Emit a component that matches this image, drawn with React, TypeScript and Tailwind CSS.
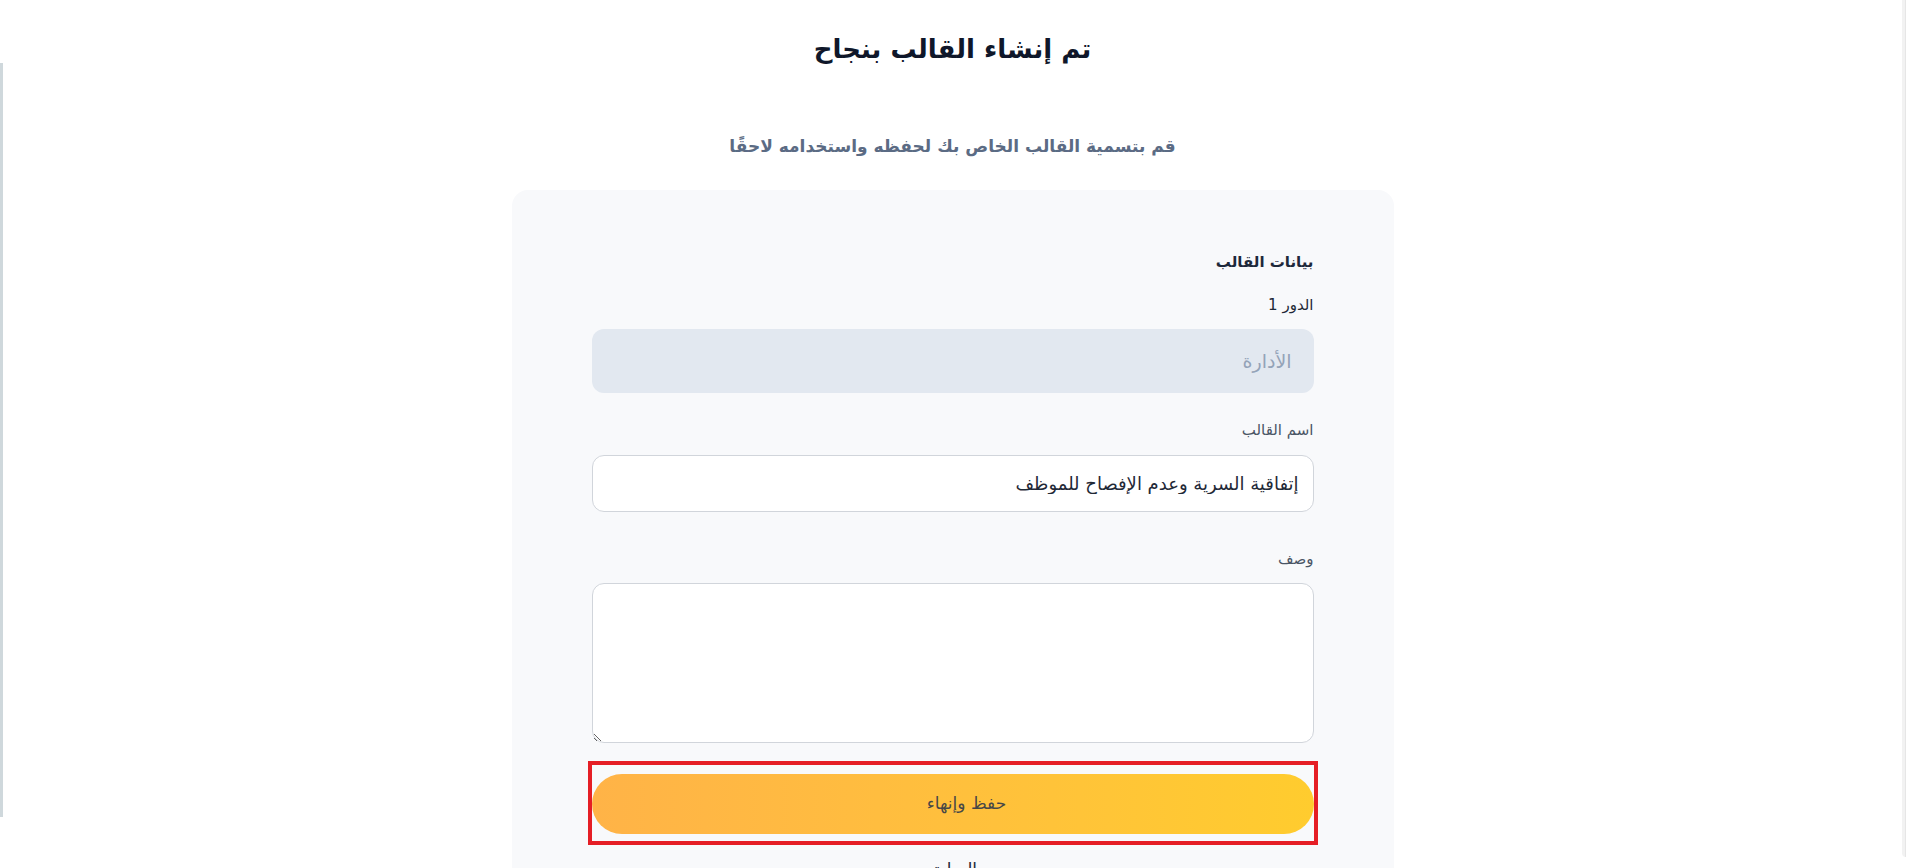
import React from "react";

const font = { fontFamily: '"DejaVu Sans", "Noto Sans", sans-serif' };

const Field = ({ label, children, className = "" }: { label: string; children: React.ReactNode; className?: string }) => (
  <div className={className}>
    <p className="text-[15px] leading-5 text-gray-600">{label}</p>
    {children}
  </div>
);

export default function App() {
  return (
    <div dir="rtl" style={font} className="flex h-[868px] w-full overflow-hidden bg-white">
      {/* right edge strip */}
      <div className="h-[857px] w-[4px] shrink-0 rounded-bl-sm border-r border-[#e6e6e6] bg-[#f2f2f2]" />

      <main className="flex flex-1 flex-col items-center pt-[30px]">
        <h1 className="text-[26px] font-bold leading-[38px] text-[#0f172a]">تم إنشاء القالب بنجاح</h1>
        <p className="mt-16 text-[17px] font-semibold leading-7 text-[#5b6b84]">
          قم بتسمية القالب الخاص بك لحفظه واستخدامه لاحقًا
        </p>

        <section className="mt-[30px] w-[882px] rounded-2xl bg-[#f8f9fb] px-20 pt-[60px]">
          <h2 className="text-[15px] font-bold leading-6 text-[#1e293b]">بيانات القالب</h2>

          <p className="mt-[19px] text-[15px] leading-6 text-[#1f2937]">الدور 1</p>
          <div className="mt-3 flex h-16 items-center rounded-xl bg-[#e2e8f0] px-[22px] text-[19px] text-[#94a3b8]">
            الأدارة
          </div>

          <Field label="اسم القالب" className="mt-[27px]">
            <input
              readOnly
              value="إتفاقية السرية وعدم الإفصاح للموظف"
              style={font}
              className="mt-[15px] h-[57px] w-full rounded-xl border border-[#d1d5db] bg-white px-3.5 text-[18px] text-[#1f2937] outline-none"
            />
          </Field>

          <Field label="وصف" className="mt-[37px]">
            <textarea
              style={font}
              className="mt-[14px] block h-40 w-full rounded-xl border border-[#d1d5db] bg-white p-3 text-[15px] outline-none"
            />
          </Field>

          <div className="-mx-1 mt-[18px] border-4 border-[#e51e25] pt-[9px] pb-[7px]">
            <button
              style={font}
              className="flex h-[60px] w-full items-center justify-center rounded-full bg-gradient-to-l from-[#ffcc2e] to-[#ffb347] pl-[28px] text-[17px] text-[#474747]"
            >
              حفظ وإنهاء
            </button>
          </div>

          <p className="mt-[10px] text-center text-[17px] leading-7 text-[#1f2937]">السابق</p>
        </section>
      </main>

      {/* left edge strip */}
      <div className="mt-[63px] h-[754px] w-[3px] shrink-0 bg-[#cfd8dc]" />
    </div>
  );
}
